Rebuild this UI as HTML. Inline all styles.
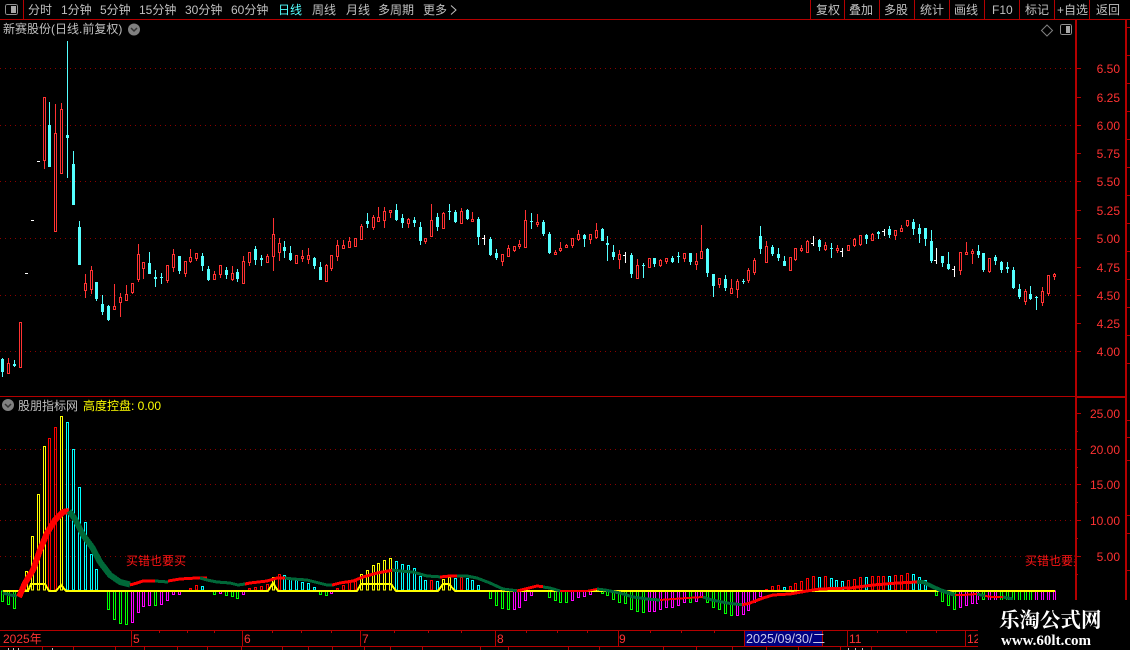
<!DOCTYPE html>
<html><head><meta charset="utf-8"><style>
html,body{margin:0;padding:0;background:#000;width:1130px;height:650px;overflow:hidden}
svg{display:block}
text{font-family:"Liberation Sans","WenQuanYi Zen Hei","Noto Sans CJK SC",sans-serif;font-size:12px}
.n{fill:#c0c0c0}.a{fill:#ff3232}
</style></head><body>
<svg width="1130" height="650" viewBox="0 0 1130 650" xmlns="http://www.w3.org/2000/svg">
<defs><clipPath id="c"><rect x="0" y="540" width="1075" height="40"/></clipPath></defs>
<rect width="1130" height="650" fill="#000"/>
<g shape-rendering="crispEdges">
<!-- grid -->
<path d="M0 68.5H1075M0 125.5H1075M0 181.5H1075M0 238.5H1075M0 295.5H1075M0 351.5H1075M0 449.5H1075M0 484.5H1075M0 520.5H1075M0 556.5H1075" stroke="#8c0000" stroke-dasharray="1 4" fill="none"/>
<!-- frame -->
<path d="M0 19.5H1130M0 396.5H1075M0 630.5H978M0 646.5H978M23.5 0V19M810.5 0V19M844.5 0V19M879.5 0V19M914.5 0V19M949.5 0V19M984.5 0V19M1019.5 0V19M1054.5 0V19M1089.5 0V19" stroke="#b40000" fill="none"/>
<rect x="1075" y="19" width="2" height="581" fill="#b40000"/>
<rect x="1125" y="19" width="2" height="581" fill="#b40000"/>
<rect x="1075" y="396" width="51" height="2" fill="#b40000"/>
<!-- axis ticks -->
<path d="M1077 68.5h4M1077 97.5h4M1077 125.5h4M1077 153.5h4M1077 181.5h4M1077 210.5h4M1077 238.5h4M1077 267.5h4M1077 295.5h4M1077 323.5h4M1077 351.5h4M1077 413.5h4M1077 449.5h4M1077 484.5h4M1077 520.5h4M1077 556.5h4M1077 431.5h1M1077 467.5h1M1077 502.5h1M1077 538.5h1M1077 574.5h1" stroke="#b40000" fill="none"/>
<path d="M1127 27.5h3M1127 55.5h3M1127 83.5h3M1127 111.5h3M1127 139.5h3M1127 167.5h3M1127 195.5h3M1127 223.5h3M1127 251.5h3M1127 279.5h3M1127 307.5h3M1127 335.5h3M1127 363.5h3M1127 420.5h3M1127 437.5h3M1127 460.5h3M1127 515.5h3M1127 533.5h3M1127 570.5h3" stroke="#b40000" fill="none"/>
<!-- candles: white -->
<path d="M25 273.5h3M31 220.5h3M37 161.5h3M484.5 235V245M482 238.5h3M625.5 252V263M623 255.5h3M813.5 236V246M811 243.5h3M842.5 248V257M840 251.5h3M884.5 229V236M882 231.5h3M936.5 248V264M934 260.5h3M954.5 266V277M952 269.5h3" stroke="#fff" fill="none"/>
<!-- candles: cyan -->
<path stroke="#54ffff" fill="none" d="M2.5 358V377M14.5 360V367M49.5 102V167M67.5 41V178M73.5 151V205M79.5 221V265M96.5 282V301M102.5 295V315M108.5 305V321M149.5 252V274M155.5 270V287M161.5 273V284M179.5 256V274M202.5 253V271M208.5 266V281M226.5 267V279M237.5 269V282M255.5 246V265M261.5 255V266M284.5 241V258M290.5 246V261M314.5 257V269M320.5 262V280M367.5 213V228M396.5 204V221M402.5 214V228M414.5 217V227M420.5 222V245M437.5 213V231M449.5 204V220M455.5 210V223M467.5 209V220M478.5 217V245M490.5 237V256M496.5 249V260M531.5 213V229M543.5 220V236M549.5 232V254M584.5 234V247M602.5 228V241M607.5 236V261M613.5 245V260M631.5 253V278M643.5 263V278M654.5 258V267M672.5 256V263M678.5 252V263M690.5 253V265M707.5 248V277M713.5 274V297M725.5 275V291M743.5 279V284M760.5 226V254M772.5 245V256M778.5 248V261M784.5 256V266M819.5 239V251M831.5 243V258M866.5 234V244M878.5 231V239M889.5 226V238M913.5 219V235M919.5 224V243M925.5 228V246M931.5 230V263M942.5 256V267M948.5 252V270M978.5 245V258M983.5 253V272M995.5 255V265M1001.5 261V273M1007.5 262V273M1013.5 267V289M1019.5 284V299M1030.5 286V300M1036.5 296V310"/>
<path fill="#54ffff" d="M1 359h3V372H1zM13 364h3V366H13zM48 125h3V167H48zM66 135h3V138H66zM72 164h3V205H72zM78 227h3V265H78zM95 282h3V299H95zM101 304h3V312H101zM107 306h3V320H107zM148 263h3V274H148zM154 277h3V279H154zM160 277h3V278H160zM178 256h3V271H178zM201 256h3V266H201zM207 269h3V280H207zM225 270h3V275H225zM236 272h3V279H236zM254 249h3V260H254zM260 258h3V260H260zM283 247h3V251H283zM289 253h3V260H289zM313 258h3V266H313zM319 267h3V280H319zM366 221h3V224H366zM395 210h3V220H395zM401 218h3V223H401zM413 220h3V223H413zM419 227h3V241H419zM436 217h3V227H436zM448 211h3V212H448zM454 212h3V222H454zM466 210h3V219H466zM477 219h3V237H477zM489 239h3V255H489zM495 253h3V258H495zM530 221h3V222H530zM542 222h3V234H542zM548 234h3V253H548zM583 235h3V239H583zM601 229h3V241H601zM606 243h3V245H606zM612 252h3V257H612zM630 255h3V274H630zM642 265h3V266H642zM653 258h3V264H653zM671 258h3V262H671zM677 256h3V257H677zM689 253h3V262H689zM706 249h3V273H706zM712 274h3V286H712zM724 279h3V288H724zM742 281h3V282H742zM759 236h3V249H759zM771 247h3V254H771zM777 254h3V258H777zM783 261h3V266H783zM818 240h3V247H818zM830 248h3V249H830zM865 235h3V239H865zM877 232h3V234H877zM888 229h3V235H888zM912 222h3V229H912zM918 228h3V234H918zM924 228h3V239H924zM930 241h3V261H930zM941 256h3V263H941zM947 264h3V269H947zM977 251h3V255H977zM982 253h3V270H982zM994 257h3V261H994zM1000 262h3V270H1000zM1006 267h3V269H1006zM1012 270h3V288H1012zM1018 289h3V297H1018zM1029 294h3V299H1029zM1035 297h3V298H1035z"/>
<!-- candles: red -->
<path stroke="#ff3232" fill="none" d="M8.5 358V373M20.5 322V368M44.5 97V169M55.5 104V231M61.5 103V173M85.5 274V298M91.5 266V294M114.5 284V310M120.5 293V317M126.5 285V300M132.5 283V294M138.5 244V282M143.5 262V279M167.5 265V283M173.5 249V272M185.5 261V277M190.5 249V263M196.5 253V261M214.5 271V280M220.5 265V278M232.5 266V281M243.5 256V283M249.5 252V266M267.5 254V262M273.5 218V271M279.5 238V261M296.5 255V264M302.5 250V262M308.5 248V264M326.5 264V281M331.5 255V271M337.5 240V261M343.5 240V249M349.5 237V247M355.5 238V246M361.5 224V239M373.5 215V230M378.5 207V221M384.5 207V228M390.5 210V218M408.5 218V228M425.5 238V244M431.5 204V236M443.5 212V228M461.5 208V223M472.5 212V221M502.5 254V266M508.5 245V256M514.5 246V252M519.5 240V249M525.5 210V247M537.5 214V227M555.5 250V254M560.5 242V252M566.5 244V248M572.5 238V248M578.5 230V241M590.5 234V244M596.5 223V239M619.5 250V269M637.5 259V278M649.5 258V267M660.5 259V267M666.5 258V264M684.5 253V262M696.5 253V270M701.5 225V258M719.5 278V288M731.5 279V294M737.5 279V298M748.5 268V283M754.5 258V275M766.5 241V262M790.5 257V270M795.5 248V261M801.5 245V252M807.5 240V252M825.5 242V251M837.5 245V253M848.5 245V250M854.5 238V247M860.5 235V246M872.5 233V240M895.5 230V240M901.5 225V231M907.5 220V227M960.5 252V275M966.5 242V254M972.5 249V264M989.5 258V273M1025.5 289V305M1042.5 287V306M1048.5 275V296M1054.5 273V280"/>
<path stroke="#ff3232" fill="#000" d="M7.5 363.5h2V373.5h-2zM19.5 322.5h2V367.5h-2zM43.5 97.5h2V160.5h-2zM54.5 133.5h2V231.5h-2zM60.5 109.5h2V173.5h-2zM84.5 283.5h2V290.5h-2zM90.5 270.5h2V289.5h-2zM113.5 306.5h2V309.5h-2zM119.5 297.5h2V302.5h-2zM125.5 294.5h2V300.5h-2zM131.5 283.5h2V292.5h-2zM137.5 254.5h2V279.5h-2zM142.5 262.5h2V268.5h-2zM166.5 265.5h2V280.5h-2zM172.5 254.5h2V267.5h-2zM184.5 261.5h2V273.5h-2zM189.5 257.5h2V261.5h-2zM195.5 253.5h2V258.5h-2zM213.5 274.5h2V279.5h-2zM219.5 265.5h2V274.5h-2zM231.5 273.5h2V279.5h-2zM242.5 261.5h2V283.5h-2zM248.5 252.5h2V262.5h-2zM266.5 256.5h2V262.5h-2zM272.5 234.5h2V256.5h-2zM278.5 243.5h2V252.5h-2zM295.5 255.5h2V263.5h-2zM301.5 256.5h2V258.5h-2zM307.5 255.5h2V259.5h-2zM325.5 265.5h2V281.5h-2zM330.5 255.5h2V268.5h-2zM336.5 245.5h2V256.5h-2zM342.5 245.5h2V248.5h-2zM348.5 241.5h2V247.5h-2zM354.5 238.5h2V246.5h-2zM360.5 226.5h2V239.5h-2zM372.5 217.5h2V227.5h-2zM377.5 217.5h2V221.5h-2zM383.5 211.5h2V220.5h-2zM389.5 210.5h2V212.5h-2zM407.5 219.5h2V223.5h-2zM424.5 238.5h2V241.5h-2zM430.5 220.5h2V236.5h-2zM442.5 213.5h2V228.5h-2zM460.5 211.5h2V223.5h-2zM471.5 219.5h2V221.5h-2zM501.5 254.5h2V261.5h-2zM507.5 248.5h2V256.5h-2zM513.5 246.5h2V250.5h-2zM518.5 244.5h2V246.5h-2zM524.5 220.5h2V247.5h-2zM536.5 222.5h2V224.5h-2zM554.5 252.5h2V254.5h-2zM559.5 248.5h2V250.5h-2zM565.5 245.5h2V247.5h-2zM571.5 238.5h2V245.5h-2zM577.5 234.5h2V239.5h-2zM589.5 234.5h2V239.5h-2zM595.5 230.5h2V237.5h-2zM618.5 254.5h2V259.5h-2zM636.5 265.5h2V278.5h-2zM648.5 258.5h2V267.5h-2zM659.5 260.5h2V265.5h-2zM665.5 258.5h2V261.5h-2zM683.5 253.5h2V258.5h-2zM695.5 261.5h2V264.5h-2zM700.5 251.5h2V258.5h-2zM718.5 278.5h2V284.5h-2zM730.5 288.5h2V293.5h-2zM736.5 281.5h2V289.5h-2zM747.5 270.5h2V280.5h-2zM753.5 260.5h2V272.5h-2zM765.5 246.5h2V262.5h-2zM789.5 257.5h2V270.5h-2zM794.5 248.5h2V259.5h-2zM800.5 248.5h2V250.5h-2zM806.5 241.5h2V252.5h-2zM824.5 245.5h2V249.5h-2zM836.5 248.5h2V250.5h-2zM847.5 245.5h2V250.5h-2zM853.5 239.5h2V245.5h-2zM859.5 235.5h2V244.5h-2zM871.5 234.5h2V240.5h-2zM894.5 230.5h2V235.5h-2zM900.5 228.5h2V231.5h-2zM906.5 220.5h2V225.5h-2zM959.5 252.5h2V270.5h-2zM965.5 252.5h2V254.5h-2zM971.5 251.5h2V253.5h-2zM988.5 258.5h2V271.5h-2zM1024.5 291.5h2V301.5h-2zM1041.5 291.5h2V302.5h-2zM1047.5 275.5h2V293.5h-2zM1053.5 274.5h2V276.5h-2z"/>
<!-- lower bars -->
<path fill="none" stroke="#ffff00" d="M25.5 571.5h2V590h-2zM31.5 536.5h2V590h-2zM37.5 494.5h2V590h-2zM43.5 446.5h2V590h-2zM60.5 416.5h2V590h-2zM272.5 577.5h2V590h-2zM360.5 574.5h2V590h-2zM366.5 570.5h2V590h-2zM372.5 565.5h2V590h-2zM377.5 563.5h2V590h-2zM383.5 560.5h2V590h-2zM389.5 558.5h2V590h-2zM442.5 579.5h2V590h-2zM448.5 577.5h2V590h-2z"/>
<path fill="none" stroke="#ff0000" d="M48.5 438.5h2V590h-2zM54.5 427.5h2V590h-2zM189.5 588.5h2V590h-2zM195.5 585.5h2V590h-2zM248.5 588.5h2V590h-2zM254.5 587.5h2V590h-2zM260.5 586.5h2V590h-2zM266.5 584.5h2V590h-2zM278.5 574.5h2V590h-2zM336.5 588.5h2V590h-2zM342.5 585.5h2V590h-2zM348.5 582.5h2V590h-2zM354.5 581.5h2V590h-2zM430.5 580.5h2V590h-2zM460.5 577.5h2V590h-2zM765.5 589.5h2V590h-2zM771.5 586.5h2V590h-2zM777.5 585.5h2V590h-2zM789.5 586.5h2V590h-2zM794.5 583.5h2V590h-2zM800.5 581.5h2V590h-2zM806.5 578.5h2V590h-2zM812.5 576.5h2V590h-2zM824.5 576.5h2V590h-2zM847.5 580.5h2V590h-2zM853.5 579.5h2V590h-2zM859.5 577.5h2V590h-2zM871.5 576.5h2V590h-2zM877.5 576.5h2V590h-2zM882.5 576.5h2V590h-2zM894.5 575.5h2V590h-2zM900.5 575.5h2V590h-2zM906.5 573.5h2V590h-2z"/>
<path fill="none" stroke="#00ffff" d="M66.5 422.5h2V590h-2zM72.5 449.5h2V590h-2zM78.5 487.5h2V590h-2zM84.5 522.5h2V590h-2zM90.5 554.5h2V590h-2zM95.5 569.5h2V590h-2zM201.5 586.5h2V590h-2zM283.5 575.5h2V590h-2zM289.5 579.5h2V590h-2zM295.5 580.5h2V590h-2zM301.5 582.5h2V590h-2zM307.5 583.5h2V590h-2zM313.5 587.5h2V590h-2zM395.5 561.5h2V590h-2zM401.5 564.5h2V590h-2zM407.5 565.5h2V590h-2zM413.5 568.5h2V590h-2zM419.5 576.5h2V590h-2zM424.5 580.5h2V590h-2zM436.5 581.5h2V590h-2zM454.5 578.5h2V590h-2zM466.5 578.5h2V590h-2zM471.5 580.5h2V590h-2zM477.5 585.5h2V590h-2zM783.5 587.5h2V590h-2zM818.5 577.5h2V590h-2zM830.5 578.5h2V590h-2zM835.5 580.5h2V590h-2zM841.5 581.5h2V590h-2zM865.5 577.5h2V590h-2zM888.5 576.5h2V590h-2zM912.5 574.5h2V590h-2zM918.5 577.5h2V590h-2zM924.5 580.5h2V590h-2z"/>
<path fill="none" stroke="#00ff00" d="M1.5 591h2V601.5h-2zM7.5 591h2V604.5h-2zM13.5 591h2V608.5h-2zM107.5 591h2V609.5h-2zM113.5 591h2V619.5h-2zM119.5 591h2V623.5h-2zM125.5 591h2V624.5h-2zM154.5 591h2V605.5h-2zM213.5 591h2V594.5h-2zM225.5 591h2V595.5h-2zM231.5 591h2V596.5h-2zM236.5 591h2V598.5h-2zM319.5 591h2V594.5h-2zM325.5 591h2V595.5h-2zM489.5 591h2V598.5h-2zM495.5 591h2V605.5h-2zM501.5 591h2V608.5h-2zM507.5 591h2V609.5h-2zM548.5 591h2V597.5h-2zM554.5 591h2V600.5h-2zM559.5 591h2V602.5h-2zM565.5 591h2V602.5h-2zM601.5 591h2V593.5h-2zM606.5 591h2V595.5h-2zM612.5 591h2V599.5h-2zM618.5 591h2V602.5h-2zM624.5 591h2V603.5h-2zM630.5 591h2V609.5h-2zM636.5 591h2V611.5h-2zM642.5 591h2V612.5h-2zM689.5 591h2V602.5h-2zM706.5 591h2V602.5h-2zM712.5 591h2V607.5h-2zM718.5 591h2V609.5h-2zM724.5 591h2V613.5h-2zM730.5 591h2V615.5h-2zM935.5 591h2V595.5h-2zM941.5 591h2V601.5h-2zM947.5 591h2V605.5h-2zM953.5 591h2V609.5h-2zM982.5 591h2V599.5h-2zM1000.5 591h2V600.5h-2zM1006.5 591h2V600.5h-2zM1012.5 591h2V600.5h-2zM1018.5 591h2V600.5h-2zM1024.5 591h2V600.5h-2zM1029.5 591h2V600.5h-2z"/>
<path fill="none" stroke="#ff00ff" d="M19.5 591h2V595.5h-2zM131.5 591h2V622.5h-2zM137.5 591h2V612.5h-2zM142.5 591h2V606.5h-2zM148.5 591h2V605.5h-2zM160.5 591h2V604.5h-2zM166.5 591h2V600.5h-2zM172.5 591h2V594.5h-2zM178.5 591h2V594.5h-2zM219.5 591h2V593.5h-2zM242.5 591h2V594.5h-2zM330.5 591h2V593.5h-2zM513.5 591h2V609.5h-2zM518.5 591h2V607.5h-2zM524.5 591h2V600.5h-2zM530.5 591h2V595.5h-2zM571.5 591h2V600.5h-2zM577.5 591h2V597.5h-2zM583.5 591h2V596.5h-2zM589.5 591h2V594.5h-2zM648.5 591h2V611.5h-2zM653.5 591h2V611.5h-2zM659.5 591h2V609.5h-2zM665.5 591h2V607.5h-2zM671.5 591h2V607.5h-2zM677.5 591h2V605.5h-2zM683.5 591h2V602.5h-2zM695.5 591h2V601.5h-2zM700.5 591h2V597.5h-2zM736.5 591h2V615.5h-2zM742.5 591h2V614.5h-2zM747.5 591h2V610.5h-2zM753.5 591h2V602.5h-2zM759.5 591h2V596.5h-2zM959.5 591h2V607.5h-2zM965.5 591h2V605.5h-2zM971.5 591h2V603.5h-2zM976.5 591h2V603.5h-2zM988.5 591h2V600.5h-2zM994.5 591h2V600.5h-2zM1035.5 591h2V600.5h-2zM1041.5 591h2V600.5h-2zM1047.5 591h2V600.5h-2zM1053.5 591h2V600.5h-2z"/>
</g>
<!-- yellow line -->
<path shape-rendering="crispEdges" d="M3 591H28L31 584H45L49 591H56L61 585L66 591H268L273 583L278 591H357L361 584H391L396 591H438L443 584H449L455 591H1055" fill="none" stroke="#ffff00" stroke-width="2" stroke-linejoin="miter"/>
<!-- ribbon -->
<g fill="none" stroke-linejoin="round" stroke-linecap="butt" shape-rendering="crispEdges">
<path d="M3 593L10 595L17 596" stroke="#006838" stroke-width="3"/>
<path d="M19 597L25 583L33 570L40 550L47 533L55 520L63 512L69 511" stroke="#ff0000" stroke-width="6"/>
<path d="M69 511L75 519L83 535L92 547L100 562L110 575L120 582L130 584.5" stroke="#006838" stroke-width="6"/>
<path d="M130 585L137 583L143 581L155 581" stroke="#ff0000" stroke-width="3"/>
<path d="M155 581L168 582" stroke="#006838" stroke-width="3"/>
<path d="M168 581L180 579L197 578L207 578" stroke="#ff0000" stroke-width="3"/>
<path d="M200 578L207 580L217 582L230 583L238 585L245 584" stroke="#006838" stroke-width="3"/>
<path d="M245 584L250 583L267 581L277 578L287 578" stroke="#ff0000" stroke-width="3"/>
<path d="M285 578L293 579L307 580L315 582L327 585L334 585" stroke="#006838" stroke-width="3"/>
<path d="M332 585L340 583L353 581L363 577L377 573L394 570" stroke="#ff0000" stroke-width="3"/>
<path d="M392 570L400 571L413 572L427 576L442 577" stroke="#006838" stroke-width="3"/>
<path d="M440 577L450 576L459 576" stroke="#ff0000" stroke-width="3"/>
<path d="M457 576L467 576L477 578L490 583L503 589L519 591" stroke="#006838" stroke-width="3"/>
<path d="M517 591L525 589L537 586L545 587" stroke="#ff0000" stroke-width="3"/>
<path d="M543 587L550 588L560 591" stroke="#006838" stroke-width="3"/>
<path d="M560 591H587L597 589" stroke="#ff0000" stroke-width="2"/>
<path d="M597 589L605 590L620 593L633 597L647 599L660 600" stroke="#006838" stroke-width="3"/>
<path d="M660 600L673 599L687 598L703 597" stroke="#ff0000" stroke-width="2"/>
<path d="M703 597L712 600L727 603L744 605" stroke="#006838" stroke-width="3"/>
<path d="M742 605L750 603L763 598L773 595L790 594L807 591L820 589L850 588L873 585L897 583L917 582" stroke="#ff0000" stroke-width="3"/>
<path d="M917 582L923 582L940 590L955 595" stroke="#006838" stroke-width="4"/>
<path d="M955 595L963 595L977 594" stroke="#ff0000" stroke-width="2"/>
<path d="M977 594L985 596" stroke="#006838" stroke-width="3"/>
<path d="M985 596L993 597L1003 597" stroke="#ff0000" stroke-width="2"/>
<path d="M1003 597L1013 599" stroke="#006838" stroke-width="3"/>
</g>
<!-- axis/date ticks -->
<g shape-rendering="crispEdges">
<path stroke="#b40000" fill="none" d="M131.5 631V646M242.5 631V646M360.5 631V646M495.5 631V646M618.5 631V646M847.5 631V646M965.5 631V646M159.5 631v2M187.5 631v2M214.5 631v2M272.5 631v2M301.5 631v2M331.5 631v2M394.5 631v2M428.5 631v2M461.5 631v2M526.5 631v2M557.5 631v2M587.5 631v2M650.5 631v2M681.5 631v2M714.5 631v2M766.5 631v2M798.5 631v2M877.5 631v2M906.5 631v2M936.5 631v2M42.5 647v3M73.5 647v3M115.5 647v3M144.5 647v3M177.5 647v3M207.5 647v3M241.5 647v3M282.5 647v3M308.5 647v3M332.5 647v3M364.5 647v3M390.5 647v3M422.5 647v3M480.5 647v3M508.5 647v3M568.5 647v3M599.5 647v3M663.5 647v3M696.5 647v3M732.5 647v3M766.5 647v3M798.5 647v3M840.5 647v3M871.5 647v3"/>
<rect x="745" y="631" width="77" height="15" fill="#000080"/>
<path d="M744.5 631V646M822.5 631V646" stroke="#b40000"/>
<path d="M8 648h1v2H8zM13 648h1v2H13zM18 648h1v2H18zM52 648h1v2H52zM848 648h1v2H848zM855 648h1v2H855zM862 648h1v2H862z" fill="#c0c0c0"/>
</g>
<!-- labels upper -->
<g class="a" text-anchor="end">
<text x="1120" y="73">6.50</text><text x="1120" y="102">6.25</text><text x="1120" y="130">6.00</text><text x="1120" y="158">5.75</text><text x="1120" y="186">5.50</text><text x="1120" y="215">5.25</text><text x="1120" y="243">5.00</text><text x="1120" y="272">4.75</text><text x="1120" y="300">4.50</text><text x="1120" y="328">4.25</text><text x="1120" y="356">4.00</text>
<text x="1120" y="418">25.00</text><text x="1120" y="454">20.00</text><text x="1120" y="489">15.00</text><text x="1120" y="525">10.00</text><text x="1120" y="561">5.00</text>
</g>
<!-- top bar -->
<g class="n">
<text x="28" y="14">分时</text><text x="61" y="14">1分钟</text><text x="100" y="14">5分钟</text><text x="139" y="14">15分钟</text><text x="185" y="14">30分钟</text><text x="231" y="14">60分钟</text>
<text x="278" y="14" style="fill:#54ffff">日线</text>
<text x="312" y="14">周线</text><text x="346" y="14">月线</text><text x="378" y="14">多周期</text><text x="423" y="14">更多</text>
<text x="816" y="14">复权</text><text x="849" y="14">叠加</text><text x="884" y="14">多股</text><text x="920" y="14">统计</text><text x="954" y="14">画线</text><text x="992" y="14">F10</text><text x="1025" y="14">标记</text><text x="1057" y="14">+自选</text><text x="1096" y="14">返回</text>
<text x="3" y="33">新赛股份(日线.前复权)</text>
<text x="18" y="410">股朋指标网</text>
</g>
<path d="M451 5.5L456 10L451 14.5" fill="none" stroke="#c0c0c0"/>
<text x="83" y="410" style="fill:#ffff00">高度控盘: 0.00</text>
<!-- icons -->
<g shape-rendering="crispEdges">
<rect x="5.5" y="4.5" width="12" height="10" rx="2" fill="none" stroke="#909090"/><rect x="11" y="6" width="5" height="7" fill="#a8a8a8"/>
<rect x="1060.5" y="24.5" width="11" height="10" rx="2" fill="none" stroke="#909090"/><rect x="1066" y="26" width="4" height="7" fill="#a8a8a8"/>
</g>
<path d="M1047 25L1052.5 30.5L1047 36L1041.5 30.5Z" fill="none" stroke="#808080"/>
<circle cx="134" cy="29.5" r="6" fill="#808080"/><path d="M131 28l3 3 3-3" fill="none" stroke="#333" stroke-width="1.5"/>
<circle cx="8" cy="405" r="6" fill="#808080"/><path d="M5 404l3 3 3-3" fill="none" stroke="#333" stroke-width="1.5"/>
<!-- red notes -->
<text x="126" y="565" style="fill:#ff1414">买错也要买</text>
<g clip-path="url(#c)"><text x="1025" y="565" style="fill:#ff1414">买错也要买</text></g>
<!-- date labels -->
<g class="a">
<text x="3" y="643">2025年</text><text x="133" y="643">5</text><text x="244" y="643">6</text><text x="362" y="643">7</text><text x="497" y="643">8</text><text x="619" y="643">9</text><text x="849" y="643">11</text><text x="967" y="643">12</text>
</g>
<text x="746" y="643" style="fill:#c8c8e8;font-size:12.6px">2025/09/30/二</text>
<!-- watermark -->
<rect x="978" y="600" width="152" height="50" fill="#000"/>
<text x="999" y="627" style="font-family:'Noto Serif CJK SC','Liberation Serif',serif;font-weight:700;font-size:20.5px;fill:#fff">乐淘公式网</text>
<text x="1001" y="645" style="font-family:'Liberation Serif',serif;font-weight:700;font-size:15px;fill:#fff">www.60lt.com</text>
</svg>
</body></html>
